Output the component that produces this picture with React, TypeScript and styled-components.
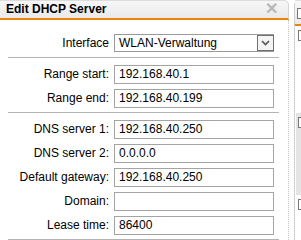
import React from "react";
import styled, { createGlobalStyle } from "styled-components";

const Global = createGlobalStyle`
  html, body { margin: 0; padding: 0; background: #ffffff; overflow: hidden; }
  body { font-family: "Liberation Sans", Arial, sans-serif; font-size: 12px; color: #000; }
`;

const Page = styled.div`
  display: flex;
  width: 301px;
  height: 240px;
  overflow: hidden;
`;

const Dialog = styled.div`
  width: 289px;
  flex: none;
  display: flex;
  flex-direction: column;
`;

const TitleBar = styled.div`
  height: 24px;
  box-sizing: border-box;
  border-top: 1px solid #dcdcdc;
  border-right: 1px solid #d4d4d4;
  border-top-right-radius: 5px;
  background: linear-gradient(#f7f7f7, #e9e9e9);
  border-bottom: 2px solid #f08200;
  height: 26px;
  display: flex;
  align-items: center;
  justify-content: space-between;
  padding: 0 10px 1px 6px;
`;

const Title = styled.div`
  font-weight: bold;
  font-size: 12px;
  color: #000;
`;

const Close = styled.div`
  color: #b8b8b8;
  font-size: 16px;
  font-weight: bold;
  line-height: 1;
`;

const Body = styled.div`
  flex: 1;
  border-right: 1px dotted #c8c8c8;
  padding: 11px 9px 0 8px;
  display: flex;
  flex-direction: column;
`;

const Row = styled.div`
  display: flex;
  align-items: center;
  height: 24px;
`;

const Label = styled.div`
  width: 101px;
  text-align: right;
  padding-right: 5px;
  flex: none;
`;

const Field = styled.div<{ $select?: boolean }>`
  width: 160px;
  height: 19px;
  box-sizing: border-box;
  border: 1px solid #a4a4a4;
  display: flex;
  align-items: center;
  padding-left: 4px;
  background: #fff;
  ${(p) => (p.$select ? "height: 18px; border-color: #9a9a9a;" : "")}
`;

const Value = styled.span`
  flex: 1;
`;

const DropButton = styled.div`
  width: 17px;
  height: 16px;
  box-sizing: border-box;
  border: 1px solid #707070;
  margin-right: -1px;
  display: flex;
  align-items: center;
  justify-content: center;
  background: #f4f4f4;
`;

const Separator = styled.div`
  height: 1px;
  background: #b4b4b4;
  margin: 2px 0 4px 0;
  width: 271px;
`;

const RightPanel = styled.div`
  flex: 1;
  margin-left: 5px;
  display: flex;
  flex-direction: column;
  border-left: 1px solid #cfcfcf;
  border-top-left-radius: 5px;
`;

const RightTitle = styled.div`
  height: 26px;
  box-sizing: border-box;
  border-top: 1px solid #dcdcdc;
  border-bottom: 2px solid #f08200;
  background: linear-gradient(#f7f7f7, #e9e9e9);
  padding: 7px 0 0 2px;
`;

const Box = styled.div`
  width: 10px;
  height: 11px;
  box-sizing: border-box;
  border: 1px solid #777;
  background: #fff;
`;

const RightSection = styled.div<{ $grey?: boolean; $h: number }>`
  height: ${(p) => p.$h}px;
  padding: 4px 0 0 2px;
  box-sizing: border-box;
  background: ${(p) => (p.$grey ? "#e4e4e4" : "#fff")};
  margin-left: 1px;
`;

const Chevron = () => (
  <svg width="9" height="6" viewBox="0 0 9 6">
    <path d="M1 1 L4.5 4.5 L8 1" fill="none" stroke="#555" strokeWidth="1.6" />
  </svg>
);

const fields1: [string, string][] = [
  ["Range start:", "192.168.40.1"],
  ["Range end:", "192.168.40.199"],
];
const fields2: [string, string][] = [
  ["DNS server 1:", "192.168.40.250"],
  ["DNS server 2:", "0.0.0.0"],
  ["Default gateway:", "192.168.40.250"],
  ["Domain:", ""],
  ["Lease time:", "86400"],
];

export default function App() {
  return (
    <>
      <Global />
      <Page>
        <Dialog>
          <TitleBar>
            <Title>Edit DHCP Server</Title>
            <Close>✕</Close>
          </TitleBar>
          <Body>
            <Row>
              <Label>Interface</Label>
              <Field $select>
                <Value>WLAN-Verwaltung</Value>
                <DropButton>
                  <Chevron />
                </DropButton>
              </Field>
            </Row>
            <Separator />
            {fields1.map(([l, v]) => (
              <Row key={l}>
                <Label>{l}</Label>
                <Field>
                  <Value>{v}</Value>
                </Field>
              </Row>
            ))}
            <Separator />
            {fields2.map(([l, v]) => (
              <Row key={l}>
                <Label>{l}</Label>
                <Field>
                  <Value>{v}</Value>
                </Field>
              </Row>
            ))}
            <Separator />
          </Body>
        </Dialog>
        <RightPanel>
          <RightTitle>
            <Box />
          </RightTitle>
          <RightSection $h={87}>
            <Box />
          </RightSection>
          <RightSection $grey $h={82}>
            <Box />
          </RightSection>
          <RightSection $h={45}>
            <Box />
          </RightSection>
        </RightPanel>
      </Page>
    </>
  );
}
